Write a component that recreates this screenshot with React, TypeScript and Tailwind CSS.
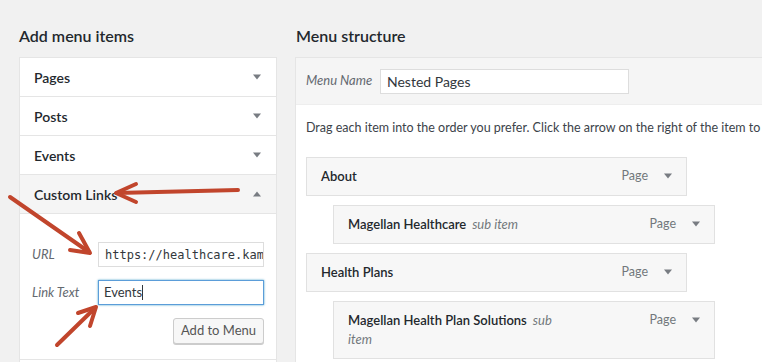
import React from 'react';

const font = { fontFamily: 'Lato, "Open Sans", sans-serif' };

function Caret({ up = false }: { up?: boolean }) {
  return (
    <svg width="8" height="6" viewBox="0 0 8 6" className="shrink-0">
      {up ? <path d="M0 5.5 L4 0.5 L8 5.5 Z" fill="#787c82" /> : <path d="M0 0.5 L8 0.5 L4 5.5 Z" fill="#787c82" />}
    </svg>
  );
}

function AccordionRow({ label }: { label: string }) {
  return (
    <div className="h-[39px] flex items-center justify-between pl-[14px] pr-[15px] bg-white border-b border-[#e5e5e5]">
      <span className="text-[14px] font-semibold text-[#23282d]">{label}</span>
      <Caret />
    </div>
  );
}

function MenuItem({ title, sub = false, indent = false, wrap = false }: { title: string; sub?: boolean; indent?: boolean; wrap?: boolean }) {
  return (
    <div
      className={
        'bg-[#f7f7f7] border border-[#e1e1e1] flex justify-between pl-[14px] pr-[14px] ' +
        (indent ? 'ml-[27px] w-[382px] ' : 'w-[381px] ') +
        (wrap ? 'items-start py-[9px] h-[58px]' : 'items-center h-[39px]')
      }
    >
      <div className={'text-[13px] leading-[19px] text-[#23282d] ' + (wrap ? 'w-[212px]' : '')}>
        <span className="font-semibold">{title}</span>
        {sub && <span className="italic text-[#72777c] ml-[6px]">sub item</span>}
      </div>
      <div className="flex items-center gap-[16px] h-[19px]">
        <span className="text-[12.5px] text-[#72777c]">Page</span>
        <Caret />
      </div>
    </div>
  );
}

export default function App() {
  return (
    <div className="relative w-[762px] h-[362px] overflow-hidden bg-[#f1f1f1] flex" style={font}>
      {/* Left: add menu items */}
      <div className="ml-[19px] w-[258px] shrink-0">
        <h3 className="pt-[24px] h-[57px] text-[16px] font-semibold text-[#23282d]">Add menu items</h3>
        <div className="border border-[#e5e5e5] border-b-0">
          <AccordionRow label="Pages" />
          <AccordionRow label="Posts" />
          <AccordionRow label="Events" />
          <div className="h-[39px] flex items-center justify-between pl-[14px] pr-[15px] bg-[#f5f5f5] border-b border-[#e5e5e5]">
            <span className="text-[14px] font-semibold text-[#23282d]">Custom Links</span>
            <Caret up />
          </div>
          <div className="bg-white pt-[28px] pb-[15px] pr-[12px] border-b border-[#e5e5e5]">
            <div className="flex items-center">
              <span className="w-[78px] pl-[12px] text-[13px] italic text-[#646970]">URL</span>
              <div className="w-[166px] h-[25px] border border-[#dddddd] bg-white flex items-center pl-[6px] overflow-hidden whitespace-nowrap text-[12px] text-[#32373c]" style={{ fontFamily: '"DejaVu Sans Mono", monospace' }}>
                https://healthcare.kam
              </div>
            </div>
            <div className="flex items-center mt-[13px]">
              <span className="w-[78px] pl-[12px] text-[13px] italic text-[#646970]">Link Text</span>
              <div className="w-[166px] h-[25px] border border-[#5b9dd9] shadow-[0_0_2px_rgba(30,140,190,0.8)] bg-white flex items-center pl-[5px] text-[13px] text-[#32373c]">
                Events<span className="w-px h-[15px] bg-[#32373c]" />
              </div>
            </div>
            <div className="flex justify-end mt-[13px]">
              <div className="w-[91px] h-[26px] rounded-[3px] border border-[#cccccc] bg-[#f7f7f7] shadow-[0_1px_0_#cccccc] flex items-center justify-center text-[13px] text-[#555555]">
                Add to Menu
              </div>
            </div>
          </div>
          <div className="h-[20px] bg-white" />
        </div>
      </div>

      {/* Right: menu structure */}
      <div className="ml-[18px] flex-1 min-w-0">
        <h3 className="pt-[24px] h-[57px] pl-[1px] text-[16px] font-semibold text-[#23282d] whitespace-nowrap">Menu structure</h3>
        <div className="w-[520px] border border-[#e5e5e5] bg-white">
          <div className="h-[47px] bg-[#f5f5f5] border-b border-[#eeeeee] flex items-center pl-[10px]">
            <span className="w-[74px] text-[13px] italic text-[#646970]">Menu Name</span>
            <div className="w-[249px] h-[25px] border border-[#dddddd] bg-white flex items-center pl-[6px] text-[14px] text-[#32373c]">
              Nested Pages
            </div>
          </div>
          <div className="pl-[10px] pt-[14px] h-[260px] overflow-hidden">
            <p className="text-[12.5px] text-[#3c434a] whitespace-nowrap">
              Drag each item into the order you prefer. Click the arrow on the right of the item to reveal
            </p>
            <div className="mt-[19px] flex flex-col gap-[9px]">
              <MenuItem title="About" />
              <MenuItem title="Magellan Healthcare" sub indent />
              <MenuItem title="Health Plans" />
              <MenuItem title="Magellan Health Plan Solutions" sub indent wrap />
            </div>
          </div>
        </div>
      </div>

      {/* Annotation arrows */}
      <svg className="absolute inset-0 pointer-events-none" width="762" height="362" viewBox="0 0 762 362">
        <g stroke="#c1452c" strokeWidth="4" strokeLinecap="round" strokeLinejoin="round" fill="none">
          <path d="M238 190 L117 193" />
          <path d="M136 184 L116 193 L136 202" />
          <path d="M10 197 L89 252" />
          <path d="M79 233 L90 253 L70 250" />
          <path d="M57 345 L95 308" />
          <path d="M78 313 L96 307 L90 326" />
        </g>
      </svg>
    </div>
  );
}
